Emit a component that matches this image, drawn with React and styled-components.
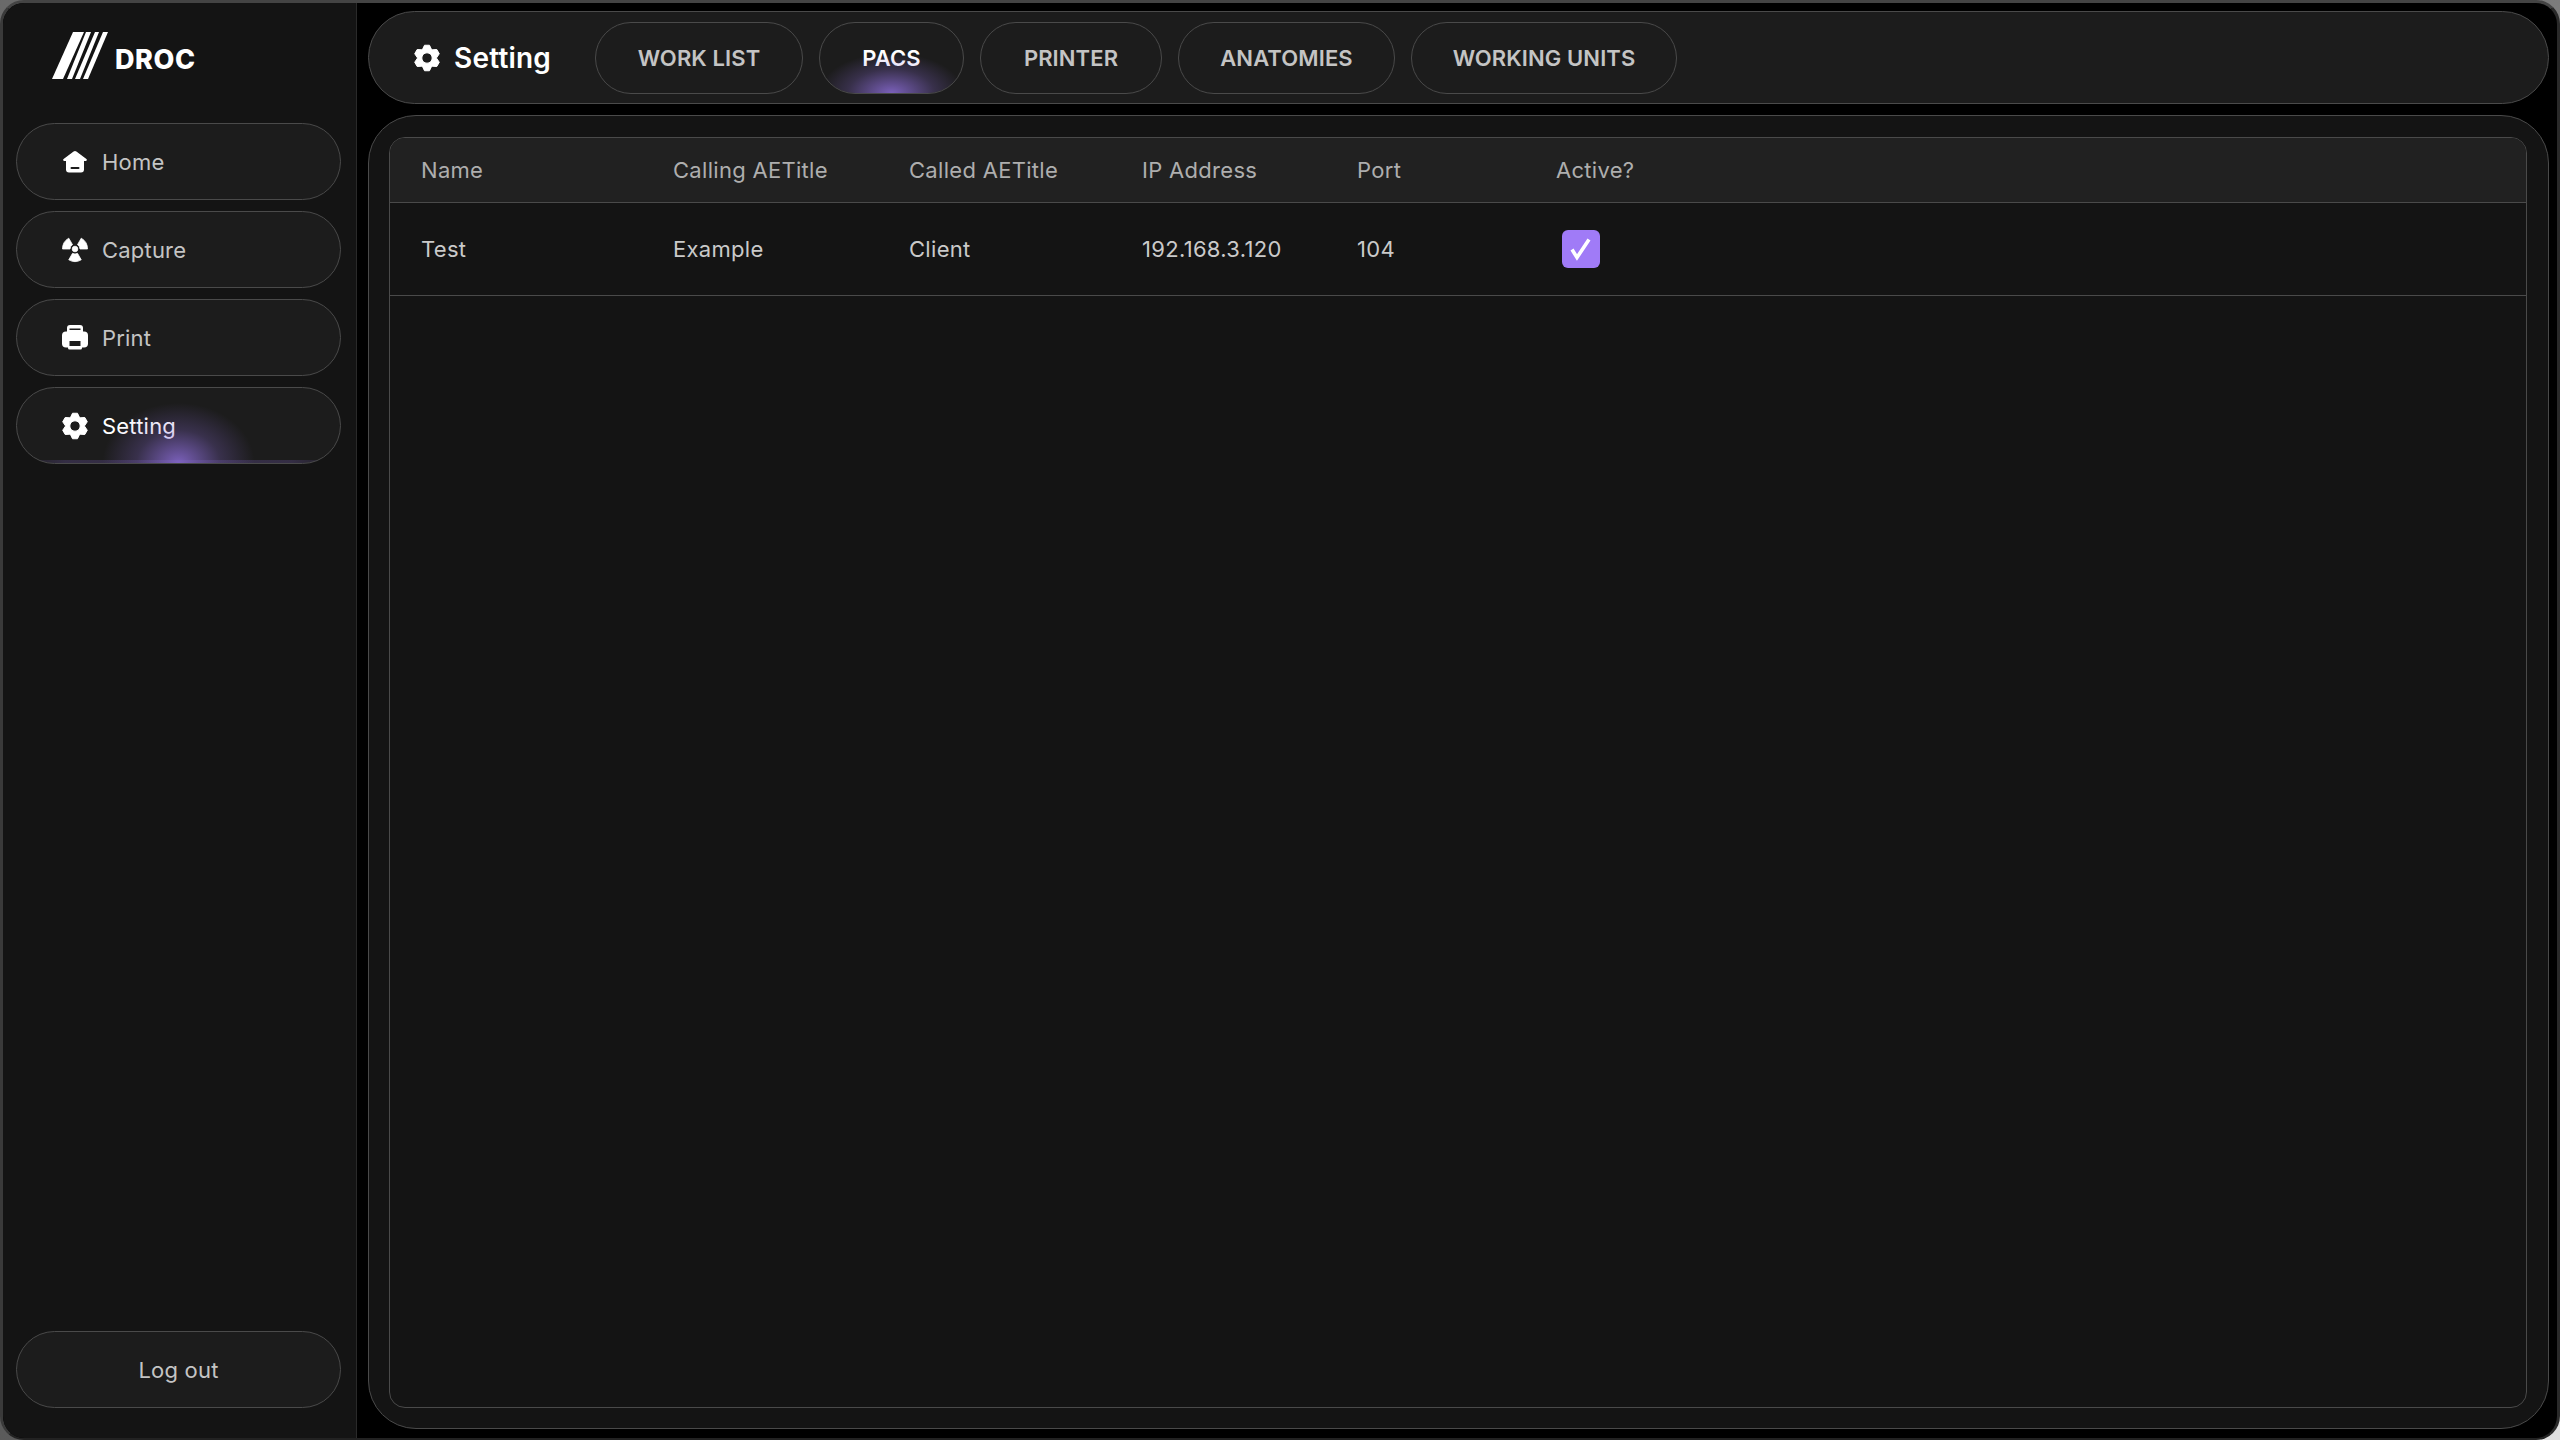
import React from "react";
import styled, { createGlobalStyle } from "styled-components";

const GlobalStyle = createGlobalStyle`
  html, body {
    margin: 0;
    padding: 0;
    background: linear-gradient(135deg, #6a6a6a, #555 50%, #e0e0e0);
  }
  * {
    box-sizing: border-box;
  }
`;

const Frame = styled.div`
  width: 2560px;
  height: 1440px;
  display: flex;
  background: #000;
  border-style: solid;
  border-width: 3px 3px 2px 3px;
  border-color: #444 #2a2a2a #222 #3a3a3a;
  border-radius: 24px;
  overflow: hidden;
  font-family: Inter, "Liberation Sans", sans-serif;
`;

const Sidebar = styled.aside`
  width: 354px;
  flex: none;
  display: flex;
  flex-direction: column;
  background: #141414;
  border-right: 1px solid #2a2a2a;
  padding: 0 13px 30px;
`;

const Logo = styled.div`
  display: flex;
  align-items: flex-start;
  gap: 7px;
  height: 120px;
  padding: 29px 0 0 36px;
  color: #fff;
  font-size: 27px;
  font-weight: 800;
  letter-spacing: 0.6px;
`;

const LogoText = styled.span`
  line-height: 20px;
  margin-top: 18px;
`;

const Nav = styled.nav`
  display: flex;
  flex-direction: column;
  gap: 11px;
  flex: 1;
`;

const NavButton = styled.button`
  position: relative;
  height: 77px;
  width: 325px;
  display: flex;
  align-items: center;
  gap: 13px;
  padding: 0 0 0 44px;
  border: 1px solid #4a4a4a;
  border-radius: 39px;
  background: #1c1c1c;
  color: ${(p) => (p.$active ? "#fff" : "#c4c4c4")};
  font-family: inherit;
  font-size: 22px;
  letter-spacing: 0.2px;
  overflow: hidden;
  &::after {
    content: "";
    position: absolute;
    inset: 0;
    pointer-events: none;
    background: ${(p) =>
      p.$active
        ? "radial-gradient(ellipse 76px 60px at 50% 100%, rgba(139,108,214,0.85), rgba(139,108,214,0.26) 55%, rgba(139,108,214,0) 100%), linear-gradient(90deg, rgba(139,108,214,0), rgba(139,108,214,0.22) 15%, rgba(139,108,214,0.22) 85%, rgba(139,108,214,0)) bottom / 100% 3px no-repeat"
        : "none"};
  }
`;

const LogoutButton = styled(NavButton)`
  justify-content: center;
  padding: 0;
`;

const Main = styled.main`
  flex: 1;
  display: flex;
  flex-direction: column;
  gap: 11px;
  padding: 8px 8px 9px 11px;
  min-width: 0;
`;

const Header = styled.header`
  height: 93px;
  flex: none;
  display: flex;
  align-items: center;
  padding: 0 0 0 44px;
  background: #1c1c1c;
  border: 1px solid #4a4a4a;
  border-radius: 47px;
`;

const PageTitle = styled.div`
  display: flex;
  align-items: center;
  gap: 13px;
  width: 182px;
  color: #fff;
  font-size: 28px;
  font-weight: 600;
  letter-spacing: 0.2px;
`;

const Tabs = styled.div`
  display: flex;
  gap: 16px;
`;

const Tab = styled.button`
  position: relative;
  height: 72px;
  width: ${(p) => p.$width}px;
  padding: 0;
  border: 1px solid #4a4a4a;
  border-radius: 36px;
  background: #1c1c1c;
  color: ${(p) => (p.$active ? "#fff" : "#c4c4c4")};
  font-family: inherit;
  font-size: 22px;
  font-weight: 600;
  letter-spacing: 0.1px;
  overflow: hidden;
  &::after {
    content: "";
    position: absolute;
    inset: 0;
    pointer-events: none;
    background: ${(p) =>
      p.$active
        ? "radial-gradient(ellipse 72px 40px at 50% 100%, rgba(139,108,214,0.85), rgba(139,108,214,0.25) 60%, rgba(139,108,214,0) 100%)"
        : "none"};
  }
`;

const Content = styled.section`
  flex: 1;
  min-height: 0;
  padding: 21px 21px 20px 20px;
  background: #141414;
  border: 1px solid #4a4a4a;
  border-radius: 48px;
  display: flex;
`;

const TablePanel = styled.div`
  flex: 1;
  border: 1px solid #4a4a4a;
  border-radius: 16px;
  overflow: hidden;
  background: #141414;
`;

const Row = styled.div`
  display: grid;
  grid-template-columns: 252px 236px 233px 215px 199px 1fr;
  align-items: center;
  padding-left: 31px;
  height: ${(p) => (p.$head ? "65px" : "93px")};
  background: ${(p) => (p.$head ? "#212121" : "transparent")};
  border-bottom: 1px solid #4a4a4a;
  color: ${(p) => (p.$head ? "#aeaeae" : "#cacaca")};
  font-size: 22px;
  letter-spacing: 0.3px;
`;

const CheckBox = styled.span`
  width: 38px;
  height: 38px;
  margin-left: 6px;
  display: flex;
  align-items: center;
  justify-content: center;
  background: #a07bf7;
  border-radius: 6px;
`;

// six toothed gear, points straight up and down
const gearOutline = Array.from({ length: 6 }, (_, i) => {
  const a = -90 + i * 60;
  const pt = (deg, r) => {
    const t = (deg * Math.PI) / 180;
    return `${(14 + r * Math.cos(t)).toFixed(2)} ${(14 + r * Math.sin(t)).toFixed(2)}`;
  };
  return `${pt(a - 11, 13)} ${pt(a + 11, 13)} ${pt(a + 30, 9.4)}`;
}).join(" L");

const GearIcon = () => (
  <svg width="28" height="28" viewBox="0 0 28 28" fill="#fff" stroke="#fff" strokeWidth="1" strokeLinejoin="round">
    <path fillRule="evenodd" d={`M${gearOutline}Z M14 8.8a5.2 5.2 0 100 10.4a5.2 5.2 0 000-10.4z`} />
  </svg>
);

const HomeIcon = () => (
  <svg width="28" height="28" viewBox="0 0 28 28" fill="#fff">
    <path
      fillRule="evenodd"
      d="M14 3c.5 0 1 .2 1.400.5l10 7.500c.9.7.4 2-.7 2H23v8.500a3 3 0 01-3 3H8a3 3 0 01-3-3V13H3.300c-1.100 0-1.600-1.300-.7-2l10-7.500c.4-.3.9-.5 1.400-.5zM10.500 19a1 1 0 000 2h7a1 1 0 000-2h-7z"
    />
  </svg>
);

const RadiationIcon = () => (
  <svg width="28" height="28" viewBox="0 0 28 28" fill="#fff" stroke="#fff" strokeWidth="0.8" strokeLinejoin="round">
    <circle cx="14" cy="13" r="2.800" />
    <path d="M1.500 13A12.500 12.500 0 017.750 2.170L11.500 8.670A5 5 0 009 13z" />
    <path d="M26.500 13A12.500 12.500 0 0020.250 2.170L16.500 8.670A5 5 0 0119 13z" />
    <path d="M20.250 23.830A12.500 12.500 0 017.750 23.830L11.500 17.330A5 5 0 0016.500 17.330z" />
  </svg>
);

const PrintIcon = () => (
  <svg width="28" height="28" viewBox="0 0 28 28" fill="#fff">
    <rect x="6" y="1" width="16" height="10" rx="3" />
    <rect x="8.500" y="4.500" width="11" height="1.500" fill="#1c1c1c" />
    <rect x="1" y="7.500" width="26" height="16" rx="4" />
    <rect x="7" y="18" width="14" height="7.500" rx="1.500" />
    <rect x="8.500" y="17" width="11" height="5" fill="#1c1c1c" />
  </svg>
);

const LogoMark = () => (
  <svg width="56" height="47" viewBox="0 0 56 47" fill="#fff">
    <polygon points="21,0 32,0 11,47 0,47" />
    <polygon points="34,0 39,0 20,47 15,47" />
    <polygon points="43,0 47,0 28,47 23,47" />
    <polygon points="51,0 56,0 36,47 31,47" />
  </svg>
);

const navItems = [
  { label: "Home", icon: <HomeIcon /> },
  { label: "Capture", icon: <RadiationIcon /> },
  { label: "Print", icon: <PrintIcon /> },
  { label: "Setting", icon: <GearIcon />, active: true },
];

const tabs = [
  { label: "WORK LIST", width: 208 },
  { label: "PACS", width: 145, active: true },
  { label: "PRINTER", width: 182 },
  { label: "ANATOMIES", width: 217 },
  { label: "WORKING UNITS", width: 266 },
];

const columns = ["Name", "Calling AETitle", "Called AETitle", "IP Address", "Port", "Active?"];

export default function App() {
  return (
    <>
      <GlobalStyle />
      <Frame>
        <Sidebar>
          <Logo>
            <LogoMark />
            <LogoText>DROC</LogoText>
          </Logo>
          <Nav>
            {navItems.map((item) => (
              <NavButton key={item.label} $active={item.active}>
                {item.icon}
                {item.label}
              </NavButton>
            ))}
          </Nav>
          <LogoutButton>Log out</LogoutButton>
        </Sidebar>
        <Main>
          <Header>
            <PageTitle>
              <GearIcon />
              Setting
            </PageTitle>
            <Tabs>
              {tabs.map((t) => (
                <Tab key={t.label} $active={t.active} $width={t.width}>
                  {t.label}
                </Tab>
              ))}
            </Tabs>
          </Header>
          <Content>
            <TablePanel>
              <Row $head>
                {columns.map((c) => (
                  <span key={c}>{c}</span>
                ))}
              </Row>
              <Row>
                <span>Test</span>
                <span>Example</span>
                <span>Client</span>
                <span>192.168.3.120</span>
                <span>104</span>
                <CheckBox>
                  <svg width="26" height="26" viewBox="0 0 26 26" fill="none">
                    <path d="M4 13.500l5 8L21 3.500" stroke="#fff" strokeWidth="3.600" />
                  </svg>
                </CheckBox>
              </Row>
            </TablePanel>
          </Content>
        </Main>
      </Frame>
    </>
  );
}
